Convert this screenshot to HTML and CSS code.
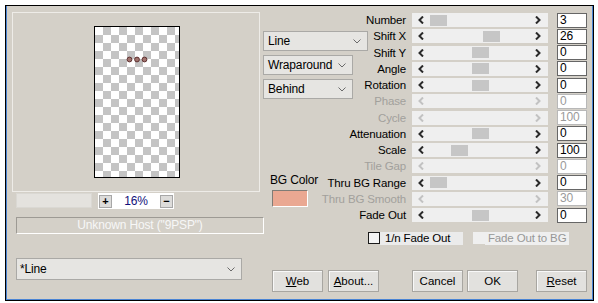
FILE: index.html
```html
<!DOCTYPE html>
<html lang="en">
  <head>
    <meta charset="UTF-8" />
    <title>Line</title>
    <link rel="stylesheet" href="styles.css">
  </head>
  <body>
    <div class="window">
      <div class="left">
        <div class="panel">
          <div class="preview">
            <svg class="dots" width="84" height="150" viewBox="0 0 84 150">
              <circle cx="34.5" cy="32.5" r="2.4"/>
              <circle cx="42" cy="32.5" r="2.4"/>
              <circle cx="49.5" cy="32.5" r="2.4"/>
            </svg>
          </div>
        </div>

        <div class="zoomrow">
          <div class="ghost"></div>
          <div class="zoom">
            <span class="zbtn">+</span>
            <b>16%</b>
            <span class="zbtn">&minus;</span>
          </div>
        </div>

        <div class="host">Unknown Host ("9PSP")</div>

        <div class="combo wide">
          <span>*Line</span>
          <svg class="chev" viewBox="0 0 8 5"><path d="M.5 .5 4 4 7.5 .5"/></svg>
        </div>
      </div>

      <div class="right">
        <div class="top">
          <div class="colA">
            <div class="combo c1"><span>Line</span><svg class="chev" viewBox="0 0 8 5"><path d="M.5 .5 4 4 7.5 .5"/></svg></div>
            <div class="combo c2"><span>Wraparound</span><svg class="chev" viewBox="0 0 8 5"><path d="M.5 .5 4 4 7.5 .5"/></svg></div>
            <div class="combo c2"><span>Behind</span><svg class="chev" viewBox="0 0 8 5"><path d="M.5 .5 4 4 7.5 .5"/></svg></div>
            <div class="bglabel">BG Color</div>
            <div class="swatch"></div>
          </div>

          <div class="rows">
            <div class="row">
              <span class="lbl">Number</span>
              <div class="slider"><svg class="arr" viewBox="0 0 6 8"><path d="M5 .5 1.5 4 5 7.5"/></svg><span class="thumb" style="left:18px"></span><svg class="arr" viewBox="0 0 6 8"><path d="M1 .5 4.5 4 1 7.5"/></svg></div>
              <span class="val">3</span>
            </div>
            <div class="row">
              <span class="lbl">Shift X</span>
              <div class="slider"><svg class="arr" viewBox="0 0 6 8"><path d="M5 .5 1.5 4 5 7.5"/></svg><span class="thumb" style="left:71px"></span><svg class="arr" viewBox="0 0 6 8"><path d="M1 .5 4.5 4 1 7.5"/></svg></div>
              <span class="val">26</span>
            </div>
            <div class="row">
              <span class="lbl">Shift Y</span>
              <div class="slider"><svg class="arr" viewBox="0 0 6 8"><path d="M5 .5 1.5 4 5 7.5"/></svg><span class="thumb" style="left:60px"></span><svg class="arr" viewBox="0 0 6 8"><path d="M1 .5 4.5 4 1 7.5"/></svg></div>
              <span class="val">0</span>
            </div>
            <div class="row">
              <span class="lbl">Angle</span>
              <div class="slider"><svg class="arr" viewBox="0 0 6 8"><path d="M5 .5 1.5 4 5 7.5"/></svg><span class="thumb" style="left:60px"></span><svg class="arr" viewBox="0 0 6 8"><path d="M1 .5 4.5 4 1 7.5"/></svg></div>
              <span class="val">0</span>
            </div>
            <div class="row">
              <span class="lbl">Rotation</span>
              <div class="slider"><svg class="arr" viewBox="0 0 6 8"><path d="M5 .5 1.5 4 5 7.5"/></svg><span class="thumb" style="left:60px"></span><svg class="arr" viewBox="0 0 6 8"><path d="M1 .5 4.5 4 1 7.5"/></svg></div>
              <span class="val">0</span>
            </div>
            <div class="row off">
              <span class="lbl">Phase</span>
              <div class="slider"><svg class="arr" viewBox="0 0 6 8"><path d="M5 .5 1.5 4 5 7.5"/></svg><svg class="arr" viewBox="0 0 6 8"><path d="M1 .5 4.5 4 1 7.5"/></svg></div>
              <span class="val">0</span>
            </div>
            <div class="row off">
              <span class="lbl">Cycle</span>
              <div class="slider"><svg class="arr" viewBox="0 0 6 8"><path d="M5 .5 1.5 4 5 7.5"/></svg><svg class="arr" viewBox="0 0 6 8"><path d="M1 .5 4.5 4 1 7.5"/></svg></div>
              <span class="val">100</span>
            </div>
            <div class="row">
              <span class="lbl">Attenuation</span>
              <div class="slider"><svg class="arr" viewBox="0 0 6 8"><path d="M5 .5 1.5 4 5 7.5"/></svg><span class="thumb" style="left:60px"></span><svg class="arr" viewBox="0 0 6 8"><path d="M1 .5 4.5 4 1 7.5"/></svg></div>
              <span class="val">0</span>
            </div>
            <div class="row">
              <span class="lbl">Scale</span>
              <div class="slider"><svg class="arr" viewBox="0 0 6 8"><path d="M5 .5 1.5 4 5 7.5"/></svg><span class="thumb" style="left:39px"></span><svg class="arr" viewBox="0 0 6 8"><path d="M1 .5 4.5 4 1 7.5"/></svg></div>
              <span class="val">100</span>
            </div>
            <div class="row off">
              <span class="lbl">Tile Gap</span>
              <div class="slider"><svg class="arr" viewBox="0 0 6 8"><path d="M5 .5 1.5 4 5 7.5"/></svg><svg class="arr" viewBox="0 0 6 8"><path d="M1 .5 4.5 4 1 7.5"/></svg></div>
              <span class="val">0</span>
            </div>
            <div class="row">
              <span class="lbl">Thru BG Range</span>
              <div class="slider"><svg class="arr" viewBox="0 0 6 8"><path d="M5 .5 1.5 4 5 7.5"/></svg><span class="thumb" style="left:18px"></span><svg class="arr" viewBox="0 0 6 8"><path d="M1 .5 4.5 4 1 7.5"/></svg></div>
              <span class="val">0</span>
            </div>
            <div class="row off">
              <span class="lbl">Thru BG Smooth</span>
              <div class="slider"><svg class="arr" viewBox="0 0 6 8"><path d="M5 .5 1.5 4 5 7.5"/></svg><svg class="arr" viewBox="0 0 6 8"><path d="M1 .5 4.5 4 1 7.5"/></svg></div>
              <span class="val">30</span>
            </div>
            <div class="row">
              <span class="lbl">Fade Out</span>
              <div class="slider"><svg class="arr" viewBox="0 0 6 8"><path d="M5 .5 1.5 4 5 7.5"/></svg><span class="thumb" style="left:60px"></span><svg class="arr" viewBox="0 0 6 8"><path d="M1 .5 4.5 4 1 7.5"/></svg></div>
              <span class="val">0</span>
            </div>
          </div>
        </div>

        <div class="checks">
          <label class="check"><span class="box"></span><span class="ctext">1/n Fade Out</span></label>
          <label class="check dis"><span class="box"></span><span class="ctext">Fade Out to BG</span></label>
        </div>

        <div class="buttons">
          <button class="btn"><u>W</u>eb</button>
          <button class="btn about"><u>A</u>bout...</button>
          <button class="btn cancel">Cancel</button>
          <button class="btn ok">OK</button>
          <button class="btn reset"><u>R</u>eset</button>
        </div>
      </div>
    </div>
  </body>
</html>
```

FILE: styles.css
```css
* {
  margin: 0;
  padding: 0;
  box-sizing: border-box;
}
body {
  width: 598px;
  height: 303px;
  background: #fff;
  color: #000;
  font-family: "Liberation Sans", Arial, sans-serif;
  font-size: 11px;
  letter-spacing: -0.15px;
  overflow: hidden;
}
.window {
  margin: 5px 0 0 5px;
  width: 589px;
  height: 296px;
  padding: 6px 6px 0;
  display: flex;
  background: #d4d0c8;
  border: 1px solid #000;
  box-shadow: inset 1px 0 #4a84d4, inset -1px 0 #4a84d4, inset 0 -1px #4a84d4;
}

/* left side */
.left {
  width: 251px;
  display: flex;
  flex-direction: column;
}
.panel {
  width: 248px;
  height: 180px;
  border: 1px solid #eeece8;
}
.preview {
  position: relative;
  width: 86px;
  height: 152px;
  margin: 13px 0 0 81px;
  border: 1px solid #000;
  background: repeating-conic-gradient(#c4c4c4 0 25%, #fff 0 50%) 0 0 / 16px 16px;
}
.dots {
  position: absolute;
  left: 0;
  top: 0;
}
.dots circle {
  fill: #a0726c;
  stroke: #5e3030;
  stroke-width: 1;
}
.zoomrow {
  display: flex;
  margin: 1px 0 0 4px;
}
.ghost {
  width: 76px;
  height: 15px;
  background: #e4e2de;
  border: 1px solid #dad8d3;
}
.zoom {
  width: 76px;
  height: 16px;
  margin-left: 6px;
  padding: 0 1px;
  display: flex;
  align-items: center;
  justify-content: space-between;
  background: #fff;
  font-size: 12px;
}
.zoom b {
  font-weight: normal;
  color: #10107a;
}
.zbtn {
  width: 13px;
  height: 13px;
  display: flex;
  align-items: center;
  justify-content: center;
  background: #dddcda;
  border: 1px solid #a7a7a7;
  font-size: 11px;
  font-weight: bold;
  line-height: 1;
}
.host {
  width: 248px;
  height: 17px;
  margin: 8px 0 0 4px;
  border: 1px solid;
  border-color: #9d9a94 #fff #fff #9d9a94;
  color: #f7f7f7;
  font-size: 12px;
  text-align: center;
  line-height: 15px;
}
.combo {
  height: 20px;
  padding: 0 6px 0 4px;
  display: flex;
  align-items: center;
  justify-content: space-between;
  background: #e6e5e2;
  border: 1px solid #aaa9a6;
  font-size: 12px;
}
.chev {
  width: 8px;
  height: 5px;
  fill: none;
  stroke: #6a6a6a;
  stroke-width: 1;
}
.wide {
  width: 226px;
  height: 22px;
  margin: 24px 0 0 4px;
  padding-left: 3px;
}

/* right side */
.right {
  width: 324px;
  display: flex;
  flex-direction: column;
}
.top {
  display: flex;
}
.colA {
  width: 105px;
  display: flex;
  flex-direction: column;
}
.colA .c1 {
  width: 105px;
  margin-top: 19px;
}
.colA .c2 {
  width: 90px;
  margin-top: 4px;
}
.bglabel {
  margin: 74px 0 0 7px;
  line-height: 14px;
  font-size: 12px;
}
.swatch {
  width: 36px;
  height: 17px;
  margin: 3px 0 0 9px;
  background: #eaa892;
  border: 1px solid;
  border-color: #7f7c76 #fff #fff #7f7c76;
}
.rows {
  width: 219px;
}
.row {
  height: 16.25px;
  display: flex;
  align-items: center;
}
.lbl {
  flex: 1 1 0;
  min-width: 0;
  display: flex;
  justify-content: flex-end;
  white-space: nowrap;
  font-size: 11.5px;
}
.slider {
  position: relative;
  flex: none;
  width: 136px;
  height: 14px;
  margin-left: 6px;
  padding: 0 7px 0 6px;
  display: flex;
  align-items: center;
  justify-content: space-between;
  background: #efefef;
  color: #2a2a2a;
}
.arr {
  width: 6px;
  height: 8px;
  fill: none;
  stroke: currentColor;
  stroke-width: 2;
}
.thumb {
  position: absolute;
  top: 1.5px;
  width: 17px;
  height: 11px;
  background: #c6c6c6;
}
.val {
  flex: none;
  width: 30px;
  height: 15px;
  margin-left: 9px;
  padding-left: 2px;
  background: #fff;
  border: 1px solid #666;
  font-size: 12px;
  line-height: 13px;
}
.off .lbl {color: #a2a09c;}
.off .slider {color: #c2c2c2;}
.off .val {color: #9a9a9a; border-color: #b8b8b8;}

.checks {
  display: flex;
  margin: 9px 0 0 105px;
}
.check {
  display: flex;
  height: 13px;
  white-space: nowrap;
}
.check .box {
  width: 12px;
  height: 12px;
  background: #f4f4f4;
  border: 1px solid #1a1a1a;
}
.ctext {
  width: 83px;
  padding-left: 5px;
  background: #ebebeb;
  line-height: 13px;
  font-size: 11.5px;
}
.check.dis {
  margin-left: 10px;
}
.check.dis .box {
  background: #efefef;
  border-color: #efefef;
}
.check.dis .ctext {
  width: 84px;
  padding-left: 3px;
  color: #979797;
  background: #efefef;
}

.buttons {
  display: flex;
  margin-top: 25px;
  padding-left: 9px;
}
.btn {
  width: 51px;
  height: 22px;
  background: #e2e1de;
  border: 1px solid #a8a6a1;
  box-shadow: inset 1px 1px #f8f8f8;
  font: inherit;
  font-size: 11.5px;
  color: #000;
}
.about {margin-left: 5px;}
.cancel {margin-left: 33px;}
.ok {margin-left: 4px;}
.reset {margin-left: 18px;}
```
